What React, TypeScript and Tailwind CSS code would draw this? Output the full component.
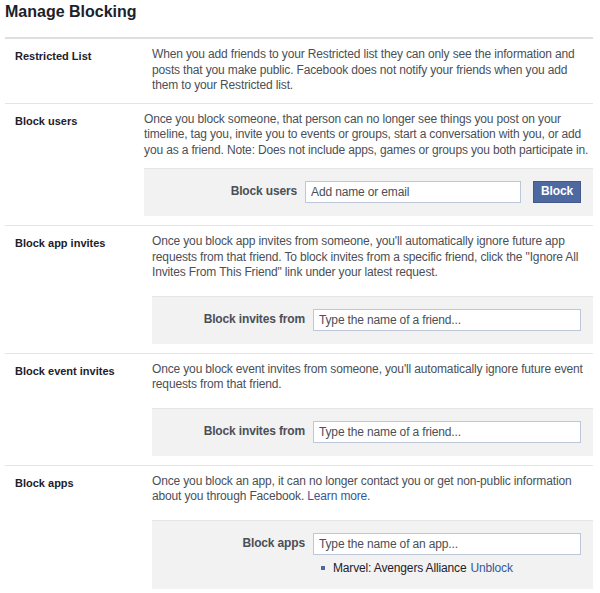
const font = { fontFamily: 'Helvetica, Arial, "Liberation Sans", sans-serif' }

function Field({ label, placeholder, button, tight, children }: { label: string; placeholder: string; button?: boolean; tight?: boolean; children?: React.ReactNode }) {
  return (
    <div className={`${tight ? 'mt-[10px]' : 'mt-[15px]'} bg-[#f2f2f2] border-t border-[#e5e5e5] pt-[12px] pb-[13px] pr-[12px]`}>
      <div className="flex items-center">
        <div className="w-[161px] text-right pr-[8px] text-[12px] font-bold text-[#4b4f56]">{label}</div>
        <input
          readOnly
          placeholder={placeholder}
          className={`h-[22px] border border-[#bdc7d8] bg-white px-[5px] text-[12px] placeholder:text-[#4b4f56] outline-none ${button ? 'w-[216px]' : 'flex-1'}`}
        />
        {button && (
          <button className="ml-[12px] h-[22px] px-[7px] bg-[#4e69a2] border border-[#435a8b] text-white text-[12px] font-bold">
            Block
          </button>
        )}
      </div>
      {children}
    </div>
  )
}

function Row({ label, children, last }: { label: string; children: React.ReactNode; last?: boolean }) {
  return (
    <div className={`flex pt-[8px] pb-[9px] ${last ? '' : 'border-b border-[#e5e5e5]'}`}>
      <div className="w-[147px] pl-[10px] pt-[1px] text-[11px] font-bold text-[#1d2129]">{label}</div>
      <div className="flex-1 text-[12px] leading-[15.5px] tracking-[-0.15px] text-[#4b4f56]">{children}</div>
    </div>
  )
}

export default function App() {
  return (
    <div style={font} className="w-[600px] h-[593px] overflow-hidden bg-white pl-[5px] pr-[7px]">
      <h1 className="pt-[1px] h-[37px] text-[16px] font-bold text-[#1d2129] leading-[22px]">Manage Blocking</h1>
      <div className="border-t-2 border-[#dddfe2]">
        <Row label="Restricted List">
          When you add friends to your Restricted list they can only see the information and posts that you make public. Facebook does not notify your friends when you add them to your Restricted list.
        </Row>
        <Row label="Block users">
          Once you block someone, that person can no longer see things you post on your timeline, tag you, invite you to events or groups, start a conversation with you, or add you as a friend. Note: Does not include apps, games or groups you both participate in.
          <Field label="Block users" placeholder="Add name or email" button tight />
        </Row>
        <Row label="Block app invites">
          Once you block app invites from someone, you'll automatically ignore future app requests from that friend. To block invites from a specific friend, click the "Ignore All Invites From This Friend" link under your latest request.
          <Field label="Block invites from" placeholder="Type the name of a friend..." />
        </Row>
        <Row label="Block event invites">
          Once you block event invites from someone, you'll automatically ignore future event requests from that friend.
          <Field label="Block invites from" placeholder="Type the name of a friend..." />
        </Row>
        <Row label="Block apps" last>
          Once you block an app, it can no longer contact you or get non-public information about you through Facebook. <span className="text-[#365899]">Learn more.</span>
          <Field label="Block apps" placeholder="Type the name of an app...">
            <div className="mt-[6px] pl-[169px] flex items-center text-[12px] text-[#1d2129]">
              <span className="w-[4px] h-[4px] bg-[#4e69a2] mr-[8px]" />
              Marvel: Avengers Alliance <span className="ml-[4px] text-[#365899]">Unblock</span>
            </div>
          </Field>
        </Row>
      </div>
    </div>
  )
}
